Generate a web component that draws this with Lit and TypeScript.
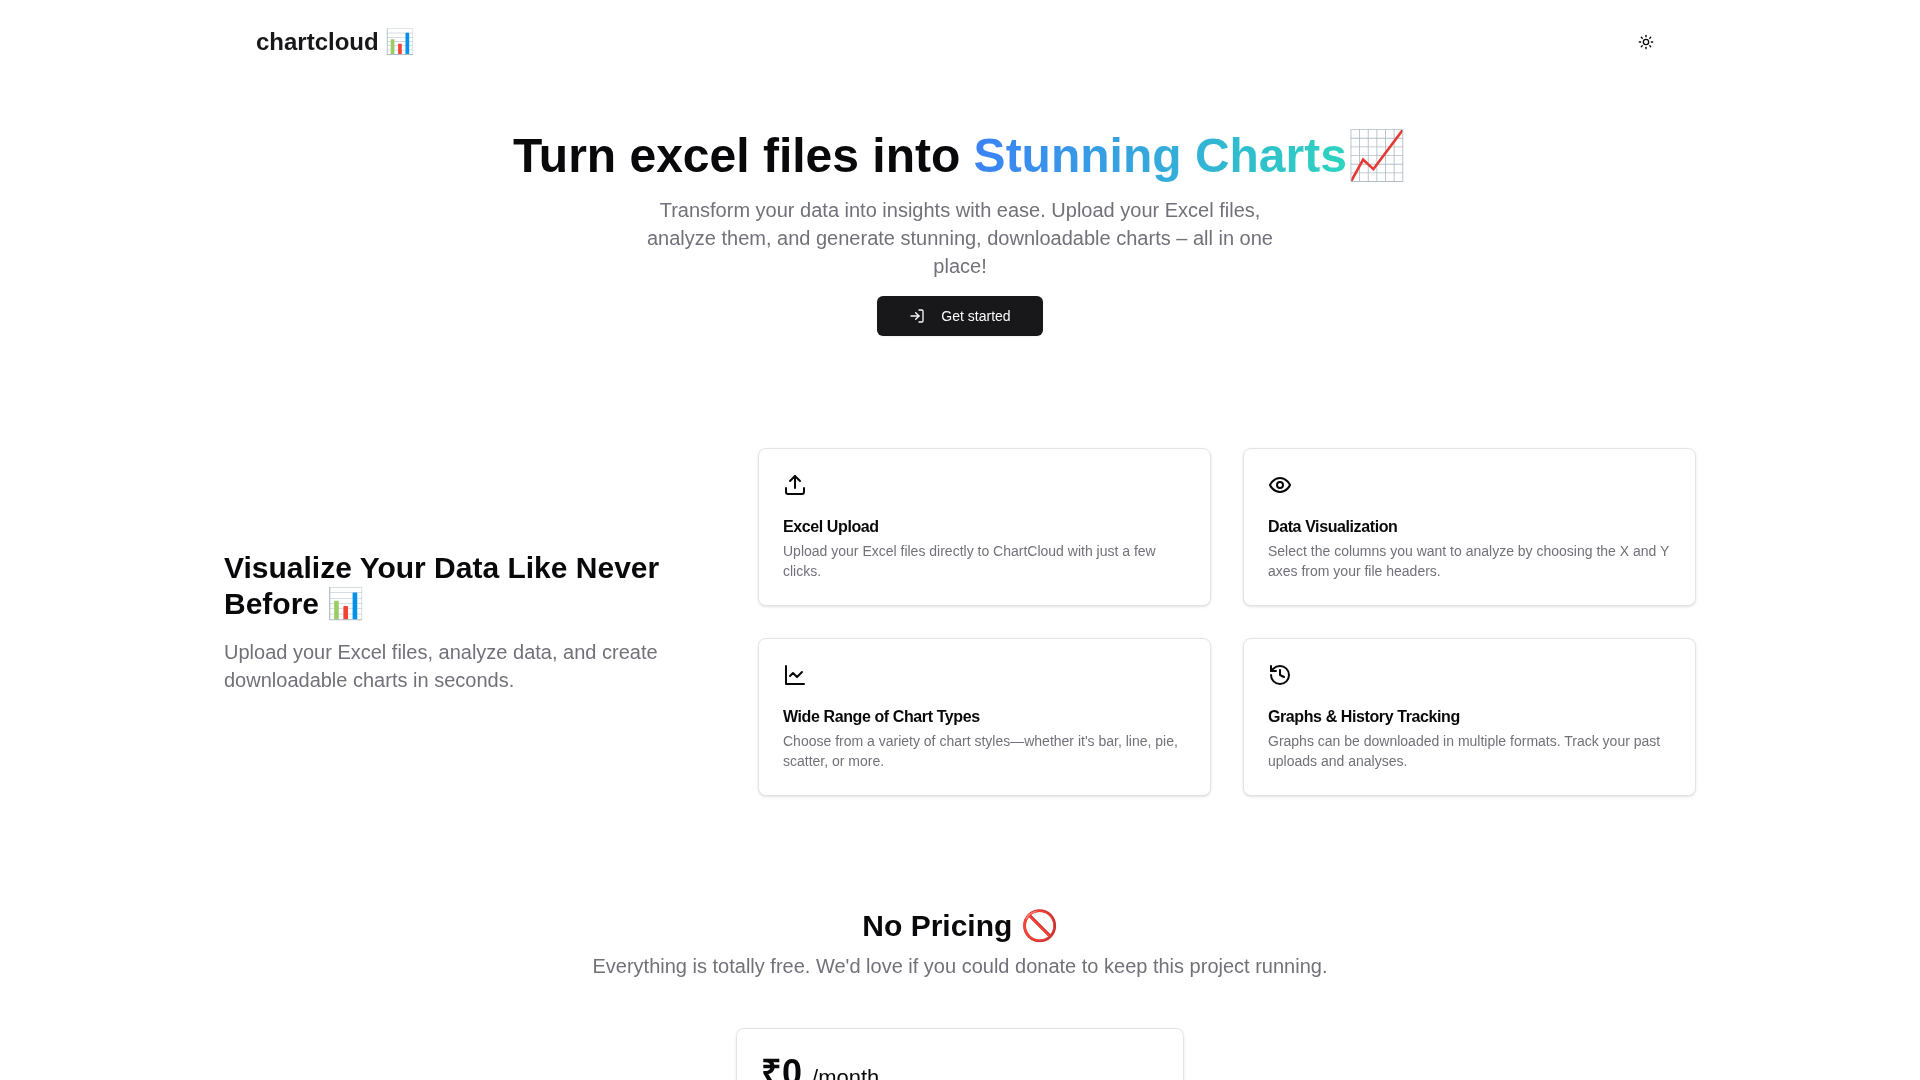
import { LitElement, html, css, svg } from "lit";
import { customElement } from "lit/decorators.js";

const icon = (size: number, body: unknown, cls = "") => html`<svg class=${cls} width=${size} height=${size} viewBox="0 0 24 24" fill="none" stroke="currentColor" stroke-width="2" stroke-linecap="round" stroke-linejoin="round">${body}</svg>`;

const sun = svg`<circle cx="12" cy="12" r="4"/><path d="M12 2v2"/><path d="M12 20v2"/><path d="m4.93 4.93 1.41 1.41"/><path d="m17.66 17.66 1.41 1.41"/><path d="M2 12h2"/><path d="M20 12h2"/><path d="m6.34 17.66-1.41 1.41"/><path d="m19.07 4.93-1.41 1.41"/>`;
const login = svg`<path d="M15 3h4a2 2 0 0 1 2 2v14a2 2 0 0 1-2 2h-4"/><polyline points="10 17 15 12 10 7"/><line x1="15" x2="3" y1="12" y2="12"/>`;
const upload = svg`<path d="M21 15v4a2 2 0 0 1-2 2H5a2 2 0 0 1-2-2v-4"/><polyline points="17 8 12 3 7 8"/><line x1="12" x2="12" y1="3" y2="15"/>`;
const eye = svg`<path d="M2 12s3-7 10-7 10 7 10 7-3 7-10 7-10-7-10-7Z"/><circle cx="12" cy="12" r="3"/>`;
const chart = svg`<path d="M3 3v18h18"/><path d="m19 9-5 5-4-4-3 3"/>`;
const history = svg`<path d="M3 12a9 9 0 1 0 9-9 9.75 9.75 0 0 0-6.74 2.74L3 8"/><path d="M3 3v5h5"/><path d="M12 7v5l4 2"/>`;

const features = [
  { i: upload, t: "Excel Upload", d: "Upload your Excel files directly to ChartCloud with just a few clicks." },
  { i: eye, t: "Data Visualization", d: "Select the columns you want to analyze by choosing the X and Y axes from your file headers." },
  { i: chart, t: "Wide Range of Chart Types", d: "Choose from a variety of chart styles—whether it's bar, line, pie, scatter, or more." },
  { i: history, t: "Graphs & History Tracking", d: "Graphs can be downloaded in multiple formats. Track your past uploads and analyses." },
];

@customElement("app-root")
export class AppRoot extends LitElement {
  static styles = css`
    :host { display: block; height: 1080px; overflow: hidden; background: #fff; color: #09090b; font-family: "Liberation Sans", Arial, sans-serif; }
    * { box-sizing: border-box; }
    h1, h2, h3, p { margin: 0; }
    .page { width: 1472px; margin: 0 auto; will-change: transform; }
    .nav { height: 84px; padding: 0 32px; display: flex; align-items: center; justify-content: space-between; }
    .logo { font-size: 24px; font-weight: 700; line-height: 32px; color: #18181b; }
    .theme { width: 36px; height: 36px; display: flex; align-items: center; justify-content: center; color: #09090b; }
    .hero { display: flex; flex-direction: column; align-items: center; text-align: center; padding-top: 42px; }
    h1 { font-size: 48px; line-height: 60px; font-weight: 700; }
    .grad { background: linear-gradient(to right, #3b82f6, #2dd4bf); -webkit-background-clip: text; background-clip: text; color: transparent; }
    .sub { width: 672px; font-size: 20px; line-height: 28px; color: #71717a; margin-top: 10px; }
    .cta { margin-top: 16px; width: 166px; height: 40px; border-radius: 6px; background: #18181b; color: #fafafa; display: flex; align-items: center; justify-content: center; gap: 16px; font-size: 14px; box-shadow: 0 1px 2px rgba(0,0,0,.05); }
    .features { margin-top: 112px; display: grid; grid-template-columns: 502px 938px; column-gap: 32px; align-items: center; }
    .left h2 { font-size: 30px; line-height: 36px; font-weight: 700; }
    .left p { margin-top: 16px; font-size: 20px; line-height: 28px; color: #71717a; }
    .cards { display: grid; grid-template-columns: 453px 453px; gap: 32px; }
    .card { height: 158px; padding: 24px; border: 1px solid #e4e4e7; border-radius: 8px; background: #fff; box-shadow: 0 1px 3px rgba(0,0,0,.1), 0 1px 2px -1px rgba(0,0,0,.1); }
    .card svg { display: block; }
    .card h3 { margin-top: 18px; font-size: 16px; line-height: 24px; font-weight: 600; letter-spacing: -0.4px; }
    .card p { font-size: 14px; line-height: 20px; color: #71717a; margin-top: 2px; }
    .pricing { margin-top: 112px; display: flex; flex-direction: column; align-items: center; text-align: center; }
    .pricing h2 { font-size: 30px; line-height: 36px; font-weight: 700; }
    .pricing > p { font-size: 20px; line-height: 28px; color: #71717a; margin-top: 8px; }
    .plan { margin-top: 48px; width: 448px; height: 300px; padding: 24px; text-align: left; border: 1px solid #e4e4e7; border-radius: 8px; box-shadow: 0 1px 3px rgba(0,0,0,.1), 0 1px 2px -1px rgba(0,0,0,.1); }
    .price { font-size: 36px; line-height: 40px; font-weight: 700; }
    .per { font-size: 22px; font-weight: 400; }
  `;

  render() {
    return html`<div class="page">
      <header class="nav">
        <div class="logo">chartcloud 📊</div>
        <div class="theme">${icon(16, sun)}</div>
      </header>
      <section class="hero">
        <h1>Turn excel files into <span class="grad">Stunning Charts</span>📈</h1>
        <p class="sub">Transform your data into insights with ease. Upload your Excel files, analyze them, and generate stunning, downloadable charts – all in one place!</p>
        <div class="cta">${icon(16, login)}<span>Get started</span></div>
      </section>
      <section class="features">
        <div class="left">
          <h2>Visualize Your Data Like Never Before 📊</h2>
          <p>Upload your Excel files, analyze data, and create downloadable charts in seconds.</p>
        </div>
        <div class="cards">
          ${features.map((f) => html`<article class="card">${icon(24, f.i)}<h3>${f.t}</h3><p>${f.d}</p></article>`)}
        </div>
      </section>
      <section class="pricing">
        <h2>No Pricing 🚫</h2>
        <p>Everything is totally free. We'd love if you could donate to keep this project running.</p>
        <div class="plan"><div class="price">₹0 <span class="per">/month</span></div></div>
      </section>
    </div>`;
  }
}
